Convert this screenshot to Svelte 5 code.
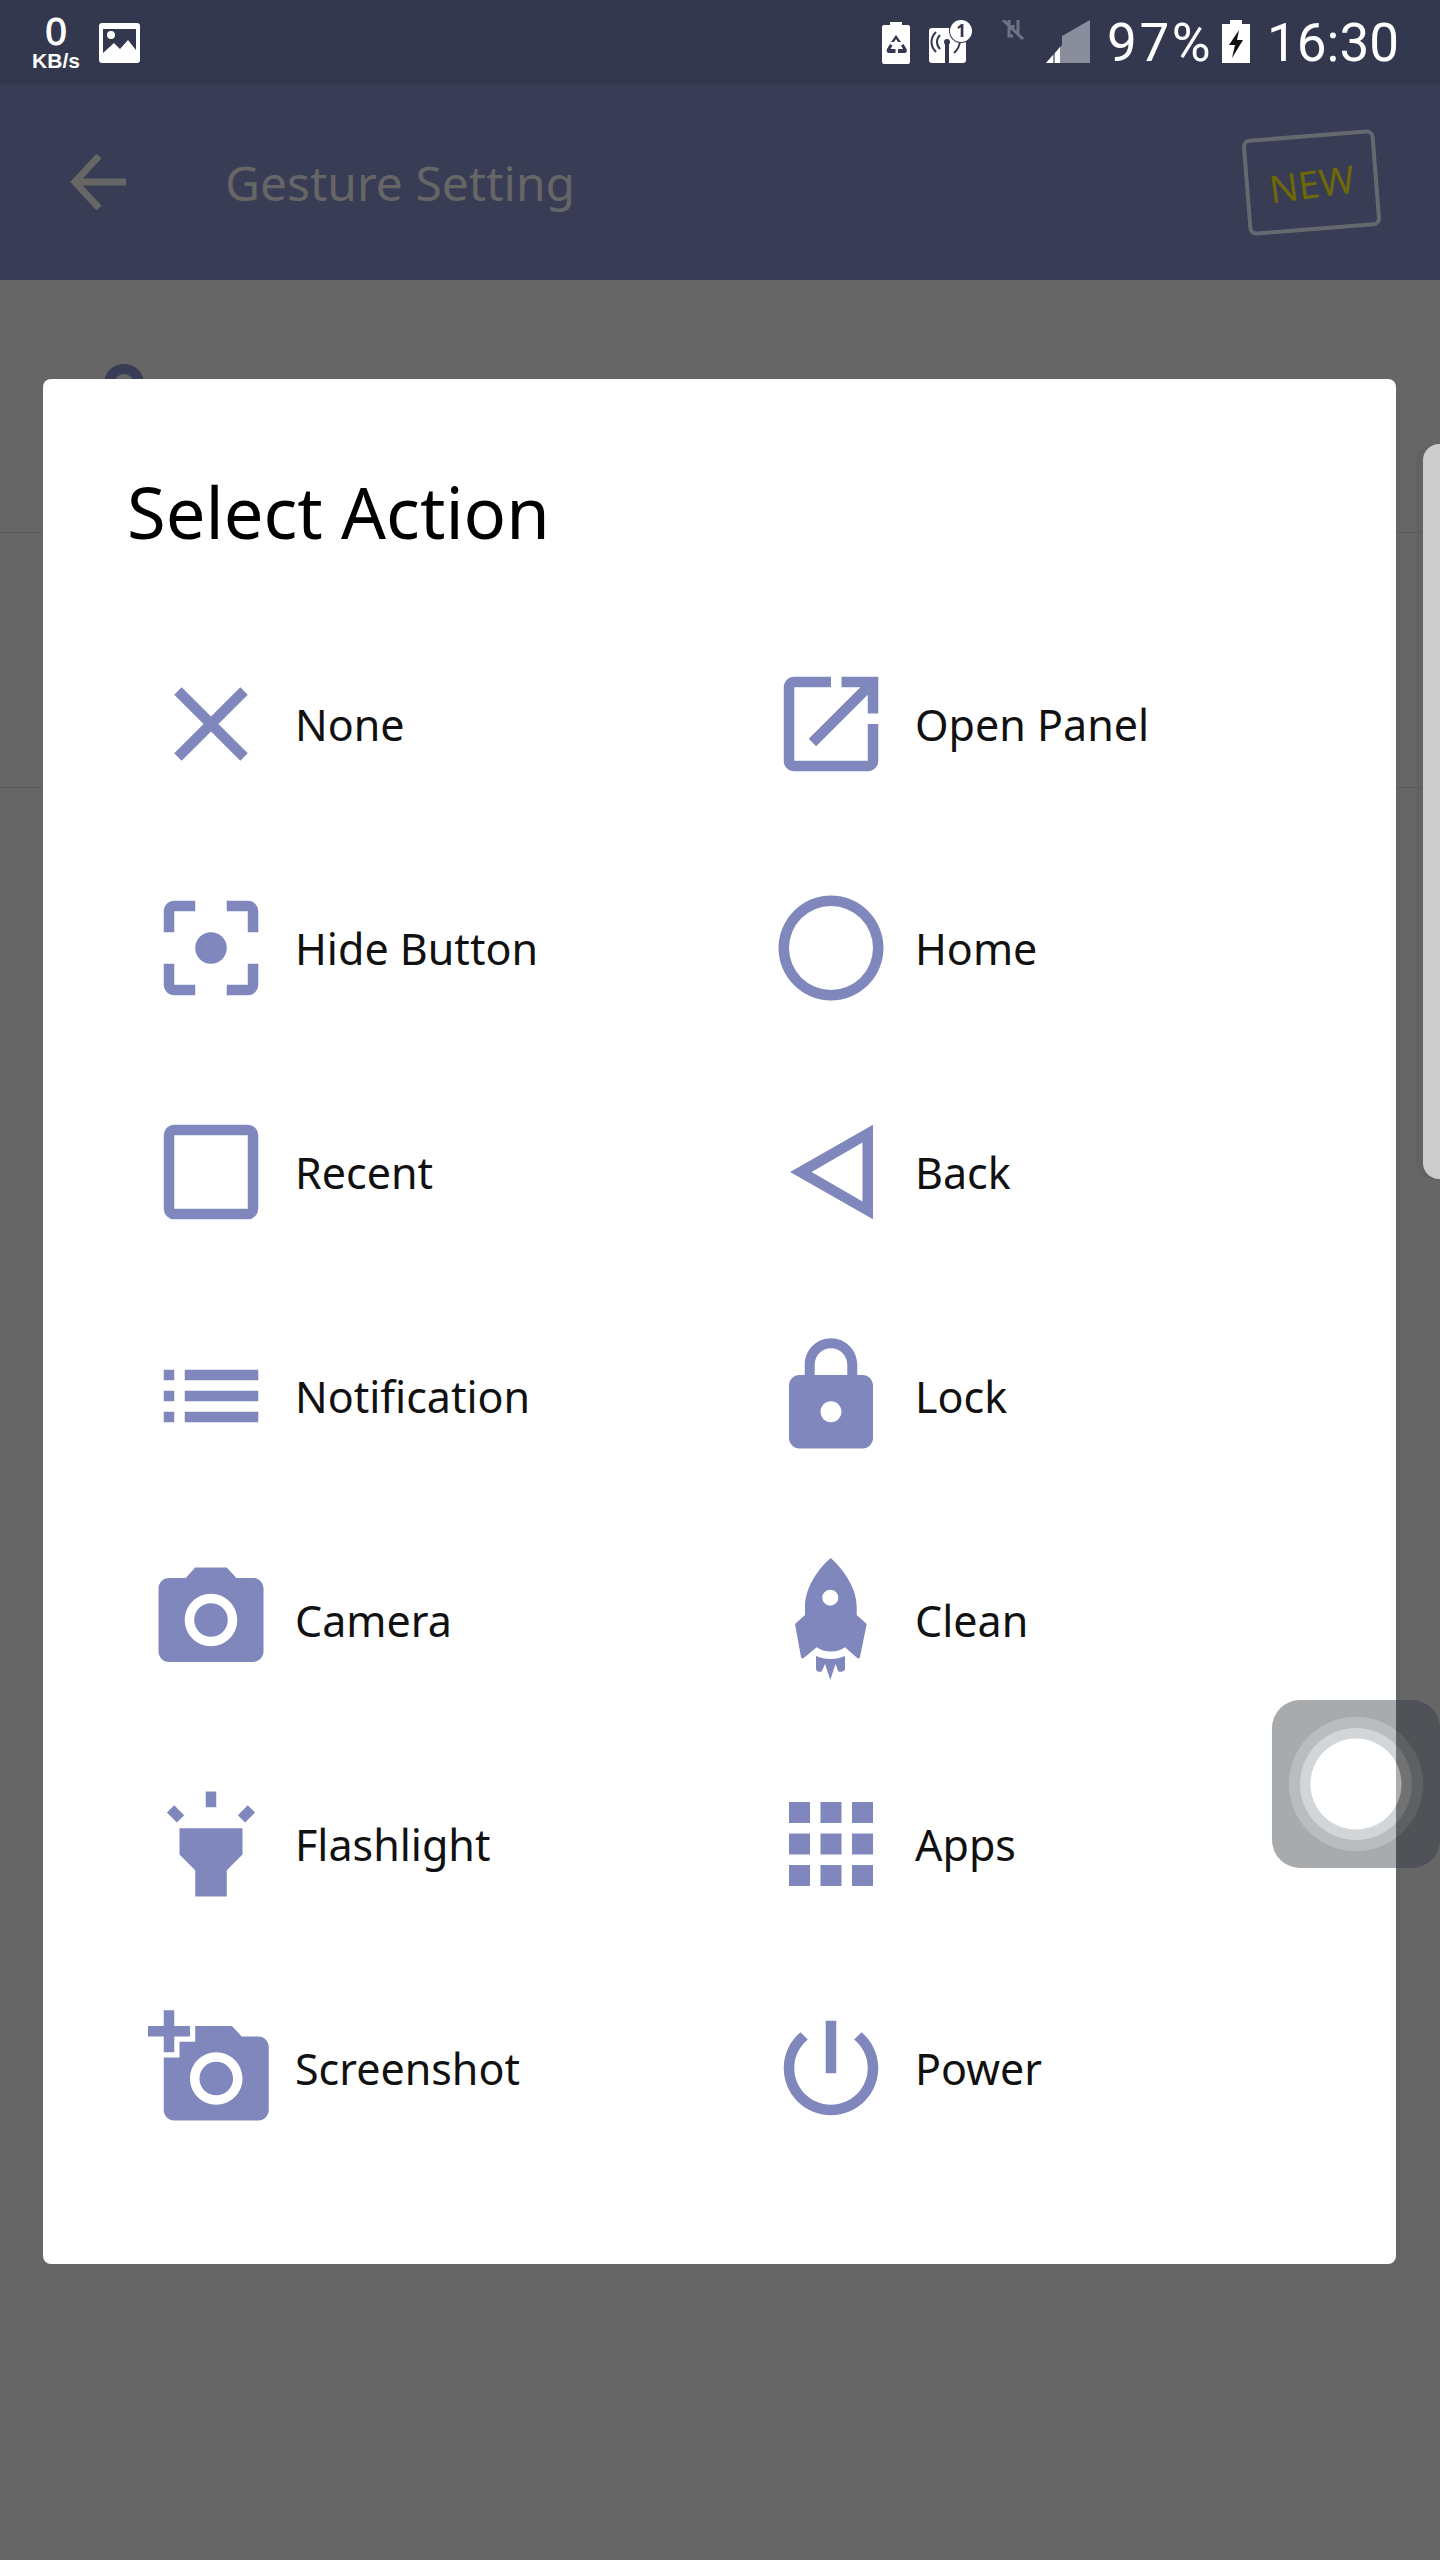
<script>
  const circle = (cx, cy, r) =>
    `M${cx - r} ${cy}a${r} ${r} 0 1 0 ${r * 2} 0a${r} ${r} 0 1 0 ${-r * 2} 0z`

  // material icons on a 24 grid, drawn at 126px. rocket is in px (26.25 = 5.25 x 5)
  const actions = [
    { label: 'None', d: 'M19 6.41L17.59 5 12 10.59 6.41 5 5 6.41 10.59 12 5 17.59 6.41 19 12 13.41 17.59 19 19 17.59 13.41 12z' },
    { label: 'Open Panel', d: 'M19 19H5V5h7V3H5c-1.11 0-2 .9-2 2v14c0 1.1.89 2 2 2h14c1.1 0 2-.9 2-2v-7h-2v7zM14 3v2h3.59l-9.83 9.83 1.41 1.41L19 6.41V10h2V3h-7z' },
    { label: 'Hide Button', d: 'M5 15H3v4c0 1.1.9 2 2 2h4v-2H5v-4zM5 5h4V3H5c-1.1 0-2 .9-2 2v4h2V5zm14-2h-4v2h4v4h2V5c0-1.1-.9-2-2-2zm0 16h-4v2h4c1.1 0 2-.9 2-2v-4h-2v4z' + circle(12, 12, 3) },
    { label: 'Home', d: circle(12, 12, 10) + circle(12, 12, 8) },
    { label: 'Recent', d: 'M5 3h14a2 2 0 0 1 2 2v14a2 2 0 0 1-2 2H5a2 2 0 0 1-2-2V5a2 2 0 0 1 2-2zM5 5v14h14V5z' },
    { label: 'Back', d: 'M20 3V21L4.2 12zM18 6.4L8.3 12 18 17.6z' },
    { label: 'Notification', d: 'M3 13h2v-2H3v2zm0 4h2v-2H3v2zm0-8h2V7H3v2zm4 4h14v-2H7v2zm0 4h14v-2H7v2zM7 7v2h14V7H7z' },
    { label: 'Lock', d: 'M18 8h-1V6c0-2.76-2.24-5-5-5S7 3.24 7 6v2H6c-1.1 0-2 .9-2 2v10c0 1.1.9 2 2 2h12c1.1 0 2-.9 2-2V10c0-1.1-.9-2-2-2zm-6 9c-1.1 0-2-.9-2-2s.9-2 2-2 2 .9 2 2-.9 2-2 2zm3.1-9H8.9V6c0-1.71 1.39-3.1 3.1-3.1 1.71 0 3.1 1.39 3.1 3.1v2z' },
    { label: 'Camera', d: 'M9 2L7.17 4H4c-1.1 0-2 .9-2 2v12c0 1.1.9 2 2 2h16c1.1 0 2-.9 2-2V6c0-1.1-.9-2-2-2h-3.17L15 2H9zm3 15c-2.76 0-5-2.24-5-5s2.24-5 5-5 5 2.24 5 5-2.24 5-5 5z' + circle(12, 12, 3.2) },
    {
      label: 'Clean',
      scale: 24 / 126,
      d: 'M62.7 1C48 14 37 32 37 50V58L27 67 33 100c.4 1.6 1.6 1.8 3 .8L48.7 90.3C56 96 70 96 77 90.3L89 100.8c1.4 1 2.6.8 3-.8L98.7 67 88.7 58V50C88.7 32 77 14 62.7 1z' + circle(62.3, 40.7, 8) + 'M48 99C57 103 68 103 77 99V112c0 2.6-5 3.4-6.7 2.4L67.5 107 62.3 123 57 107l-3.3 7.4C52 115.4 48 114.6 48 112z'
    },
    { label: 'Flashlight', d: 'M6 9h12v5l-3 3v5H9v-5l-3-3zM11 2h2v3h-2zM5 4.6L6.9 6.5 5.5 7.9 3.6 6zM19 4.6L17.1 6.5 18.5 7.9 20.4 6z' },
    { label: 'Apps', d: 'M4 8h4V4H4v4zm6 12h4v-4h-4v4zm-6 0h4v-4H4v4zm0-6h4v-4H4v4zm6 0h4v-4h-4v4zm6-10v4h4V4h-4zm-6 4h4V4h-4v4zm6 6h4v-4h-4v4zm0 6h4v-4h-4v4z' },
    { label: 'Screenshot', d: 'M3 4V1h2v3h3v2H5v3H3V6H0V4h3zm3 6V7h3V4h7l1.83 2H21c1.1 0 2 .9 2 2v12c0 1.1-.9 2-2 2H5c-1.1 0-2-.9-2-2V10h3zm7 9c2.76 0 5-2.24 5-5s-2.24-5-5-5-5 2.24-5 5 2.24 5 5 5zm-3.2-5c0 1.77 1.43 3.2 3.2 3.2s3.2-1.43 3.2-3.2-1.43-3.2-3.2-3.2-3.2 1.43-3.2 3.2z' },
    { label: 'Power', d: 'M13 3h-2v10h2V3zm4.83 2.17l-1.42 1.42C17.99 7.86 19 9.81 19 12c0 3.87-3.13 7-7 7s-7-3.13-7-7c0-2.19 1.01-4.14 2.58-5.42L6.17 5.17C4.23 6.82 3 9.26 3 12c0 4.97 4.03 9 9 9s9-4.03 9-9c0-2.74-1.23-5.18-3.17-6.83z' }
  ]
</script>

<div class="page">
  <header class="status">
    <div class="speed">
      <span class="speed-num">0</span>
      <span class="speed-unit">KB/s</span>
    </div>
    <svg class="pic" width="41" height="40" viewBox="0 0 41 40">
      <rect width="41" height="40" rx="3" fill="#fff" />
      <path d="M4 6h33v21L29 17 21 26 15 20 4 30z" fill="#33384f" />
      <circle cx="12" cy="12" r="4" fill="#fff" />
    </svg>

    <svg class="s-recycle" width="28" height="42" viewBox="0 0 28 42">
      <path d="M8 0h12v3h6a2 2 0 0 1 2 2v35a2 2 0 0 1-2 2H2a2 2 0 0 1-2-2V5a2 2 0 0 1 2-2h6z" fill="#fff" />
      <path d="M14 13l-5 7h3l2-3 2 3h3zM5 27l3-5 2.500 1.500-2 3.500h5v4H7c-2 0-3-2-2-4zM16 27h5l-2-3.500 2.500-1.500 3 5c1 2 0 4-2 4h-6.500z" fill="#33384f" />
    </svg>
    <div class="s-antenna">
      <svg width="37" height="35" viewBox="0 0 37 35">
        <rect width="37" height="35" rx="3" fill="#fff" />
        <circle cx="18" cy="14" r="3" fill="#33384f" />
        <path d="M17 16h2v19h-2zM11 7c-4 4-4 10 0 14M7 4c-6 6-6 14 0 20M25 25c3-3 6-6 6-14" fill="none" stroke="#33384f" stroke-width="2" />
      </svg>
      <span class="badge">1</span>
    </div>
    <svg class="s-nosim" width="24" height="20" viewBox="0 0 24 20">
      <path d="M2 0l20 19M8 0v16h4M12 5v4M17 0v14" fill="none" stroke="#6f7385" stroke-width="3" />
    </svg>
    <svg class="s-signal" width="44" height="43" viewBox="0 0 44 43">
      <path d="M44 0V43H16V16z" fill="#8a8d9b" />
      <path d="M0 43L16 25V43z" fill="#8a8d9b" />
      <path d="M0 43L7 35V43zM9 33l5-6V43H9z" fill="#fff" />
    </svg>
    <span class="s-text s-pct">97%</span>
    <svg class="s-bat" width="28" height="43" viewBox="0 0 28 43">
      <path d="M8 0h12v4h8v39H0V4h8z" fill="#fff" />
      <path d="M17 10L7 25h6l-3 13 11-18h-6z" fill="#111" />
    </svg>
    <span class="s-text s-time">16:30</span>
  </header>

  <div class="appbar">
    <svg class="back" width="56" height="56" viewBox="0 0 56 56">
      <path d="M56 28H5M29 2L5 28l24 26" fill="none" stroke="#666" stroke-width="7" />
    </svg>
    <h1>Gesture Setting</h1>
    <div class="new-tag"><span>NEW</span></div>
  </div>

  <section class="behind">
    <div class="setting-row"><div class="peek"></div></div>
    <div class="setting-row second"></div>
  </section>

  <div class="handle"></div>

  <div class="dialog">
    <h2>Select Action</h2>
    <ul class="actions">
      {#each actions as action}
        <li>
          <svg class="icon" width="126" height="126" viewBox="0 0 24 24">
            <path d={action.d} fill="#7f87bd" fill-rule="evenodd" transform={action.scale ? `scale(${action.scale})` : undefined} />
          </svg>
          <span>{action.label}</span>
        </li>
      {/each}
    </ul>
  </div>

  <svg class="floating" width="168" height="168" viewBox="0 0 168 168">
    <defs>
      <clipPath id="on-dialog"><rect width="124" height="168" /></clipPath>
      <clipPath id="on-scrim"><rect x="124" width="44" height="168" /></clipPath>
    </defs>
    <g clip-path="url(#on-dialog)">
      <rect width="168" height="168" rx="28" fill="#a8abae" />
      <circle cx="84" cy="84" r="67" fill="#b9bdbf" />
      <circle cx="84" cy="84" r="56" fill="#d3d6d8" />
      <circle cx="84" cy="84" r="45.500" fill="#fff" />
    </g>
    <g clip-path="url(#on-scrim)">
      <rect width="168" height="168" rx="28" fill="#4f5256" />
      <circle cx="84" cy="84" r="67" fill="#5e6164" />
      <circle cx="84" cy="84" r="56" fill="#707274" />
      <circle cx="84" cy="84" r="45.500" fill="#adaeac" />
    </g>
  </svg>
</div>

<style>
  :global(body) {
    margin: 0;
  }

  .page {
    position: relative;
    width: 1440px;
    height: 2560px;
    overflow: hidden;
    background: #666;
    font-family: 'Noto Sans', sans-serif;
  }

  .status {
    height: 84px;
    background: #33384f;
    display: flex;
    align-items: flex-start;
    color: #fff;
  }

  .speed {
    width: 50px;
    margin: 15px 0 0 31px;
    display: flex;
    flex-direction: column;
    align-items: center;
    font-family: 'Liberation Sans', sans-serif;
    font-weight: 700;
  }

  .speed-num {
    font-size: 38px;
    line-height: 34px;
    font-weight: 400;
    -webkit-text-stroke: 1px #fff;
  }

  .speed-unit {
    font-size: 21px;
    line-height: 22px;
    margin-top: 1px;
  }

  .pic {
    margin: 23px 0 0 18px;
  }

  .s-recycle {
    margin: 22px 0 0 auto;
  }

  .s-antenna {
    position: relative;
    width: 44px;
    height: 56px;
    margin: 0 0 0 19px;
  }

  .s-antenna svg {
    position: absolute;
    left: 0;
    top: 28px;
  }

  .badge {
    position: absolute;
    left: 21px;
    top: 20px;
    width: 22px;
    height: 22px;
    border-radius: 50%;
    background: #fff;
    box-shadow: 0 0 0 1px #33384f;
    color: #33384f;
    font-size: 17px;
    line-height: 22px;
    font-weight: 700;
    text-align: center;
  }

  .s-nosim {
    margin: 20px 0 0 28px;
  }

  .s-signal {
    margin: 20px 0 0 21px;
  }

  .s-text {
    font-family: Roboto, sans-serif;
    font-weight: 400;
    font-size: 53px;
    line-height: 60px;
    margin-top: 13px;
  }

  .s-pct {
    margin-left: 17px;
    letter-spacing: 2.500px;
  }

  .s-bat {
    margin: 20px 0 0 9px;
  }

  .s-time {
    margin: 13px 41px 0 17px;
  }

  .appbar {
    height: 196px;
    background: #383c54;
    display: flex;
    align-items: center;
    color: #666;
  }

  .back {
    margin: 0 0 0 70px;
  }

  h1 {
    margin: 2px 0 0 99px;
    font-size: 48px;
    font-weight: 400;
    line-height: 60px;
  }

  .new-tag {
    box-sizing: border-box;
    width: 133px;
    height: 97px;
    margin: 1px 62px 0 auto;
    border: 4px solid #666870;
    border-radius: 8px;
    transform: rotate(-4.500deg);
    display: flex;
    align-items: center;
    justify-content: center;
    color: #6e6808;
    font-size: 38px;
  }

  .new-tag span {
    display: block;
    transform: rotate(-3deg);
  }

  .behind .setting-row {
    padding-top: 84px;
    height: 168px;
    border-bottom: 1px solid #5c5c5c;
  }

  .behind .second {
    padding-top: 0;
    height: 254px;
  }

  .peek {
    width: 40px;
    height: 40px;
    margin-left: 104px;
    border-radius: 50%;
    box-sizing: border-box;
    border: 10px solid #383c54;
    background: #666;
  }

  .handle {
    position: absolute;
    right: 0;
    top: 444px;
    width: 17px;
    height: 735px;
    border-radius: 16px 0 0 16px;
    background: #ccc;
    box-shadow: -7px 0 0 rgba(0, 0, 0, 0.03);
  }

  .dialog {
    position: absolute;
    left: 43px;
    top: 379px;
    width: 1353px;
    box-sizing: border-box;
    padding: 83px 0 84px 105px;
    background: #fff;
    border-radius: 8px;
  }

  h2 {
    margin: 0 0 50px -21px;
    font-size: 70.500px;
    font-weight: 400;
    line-height: 100px;
    color: #000;
  }

  .actions {
    list-style: none;
    margin: 0;
    padding: 0;
    display: grid;
    grid-template-columns: 620px 1fr;
    grid-auto-rows: 224px;
  }

  .actions li {
    display: flex;
    align-items: center;
    gap: 21px;
    font-size: 43px;
    color: #111;
  }

  .icon {
    flex: none;
    display: block;
  }

  .floating {
    position: absolute;
    left: 1272px;
    top: 1700px;
    display: block;
  }
</style>
